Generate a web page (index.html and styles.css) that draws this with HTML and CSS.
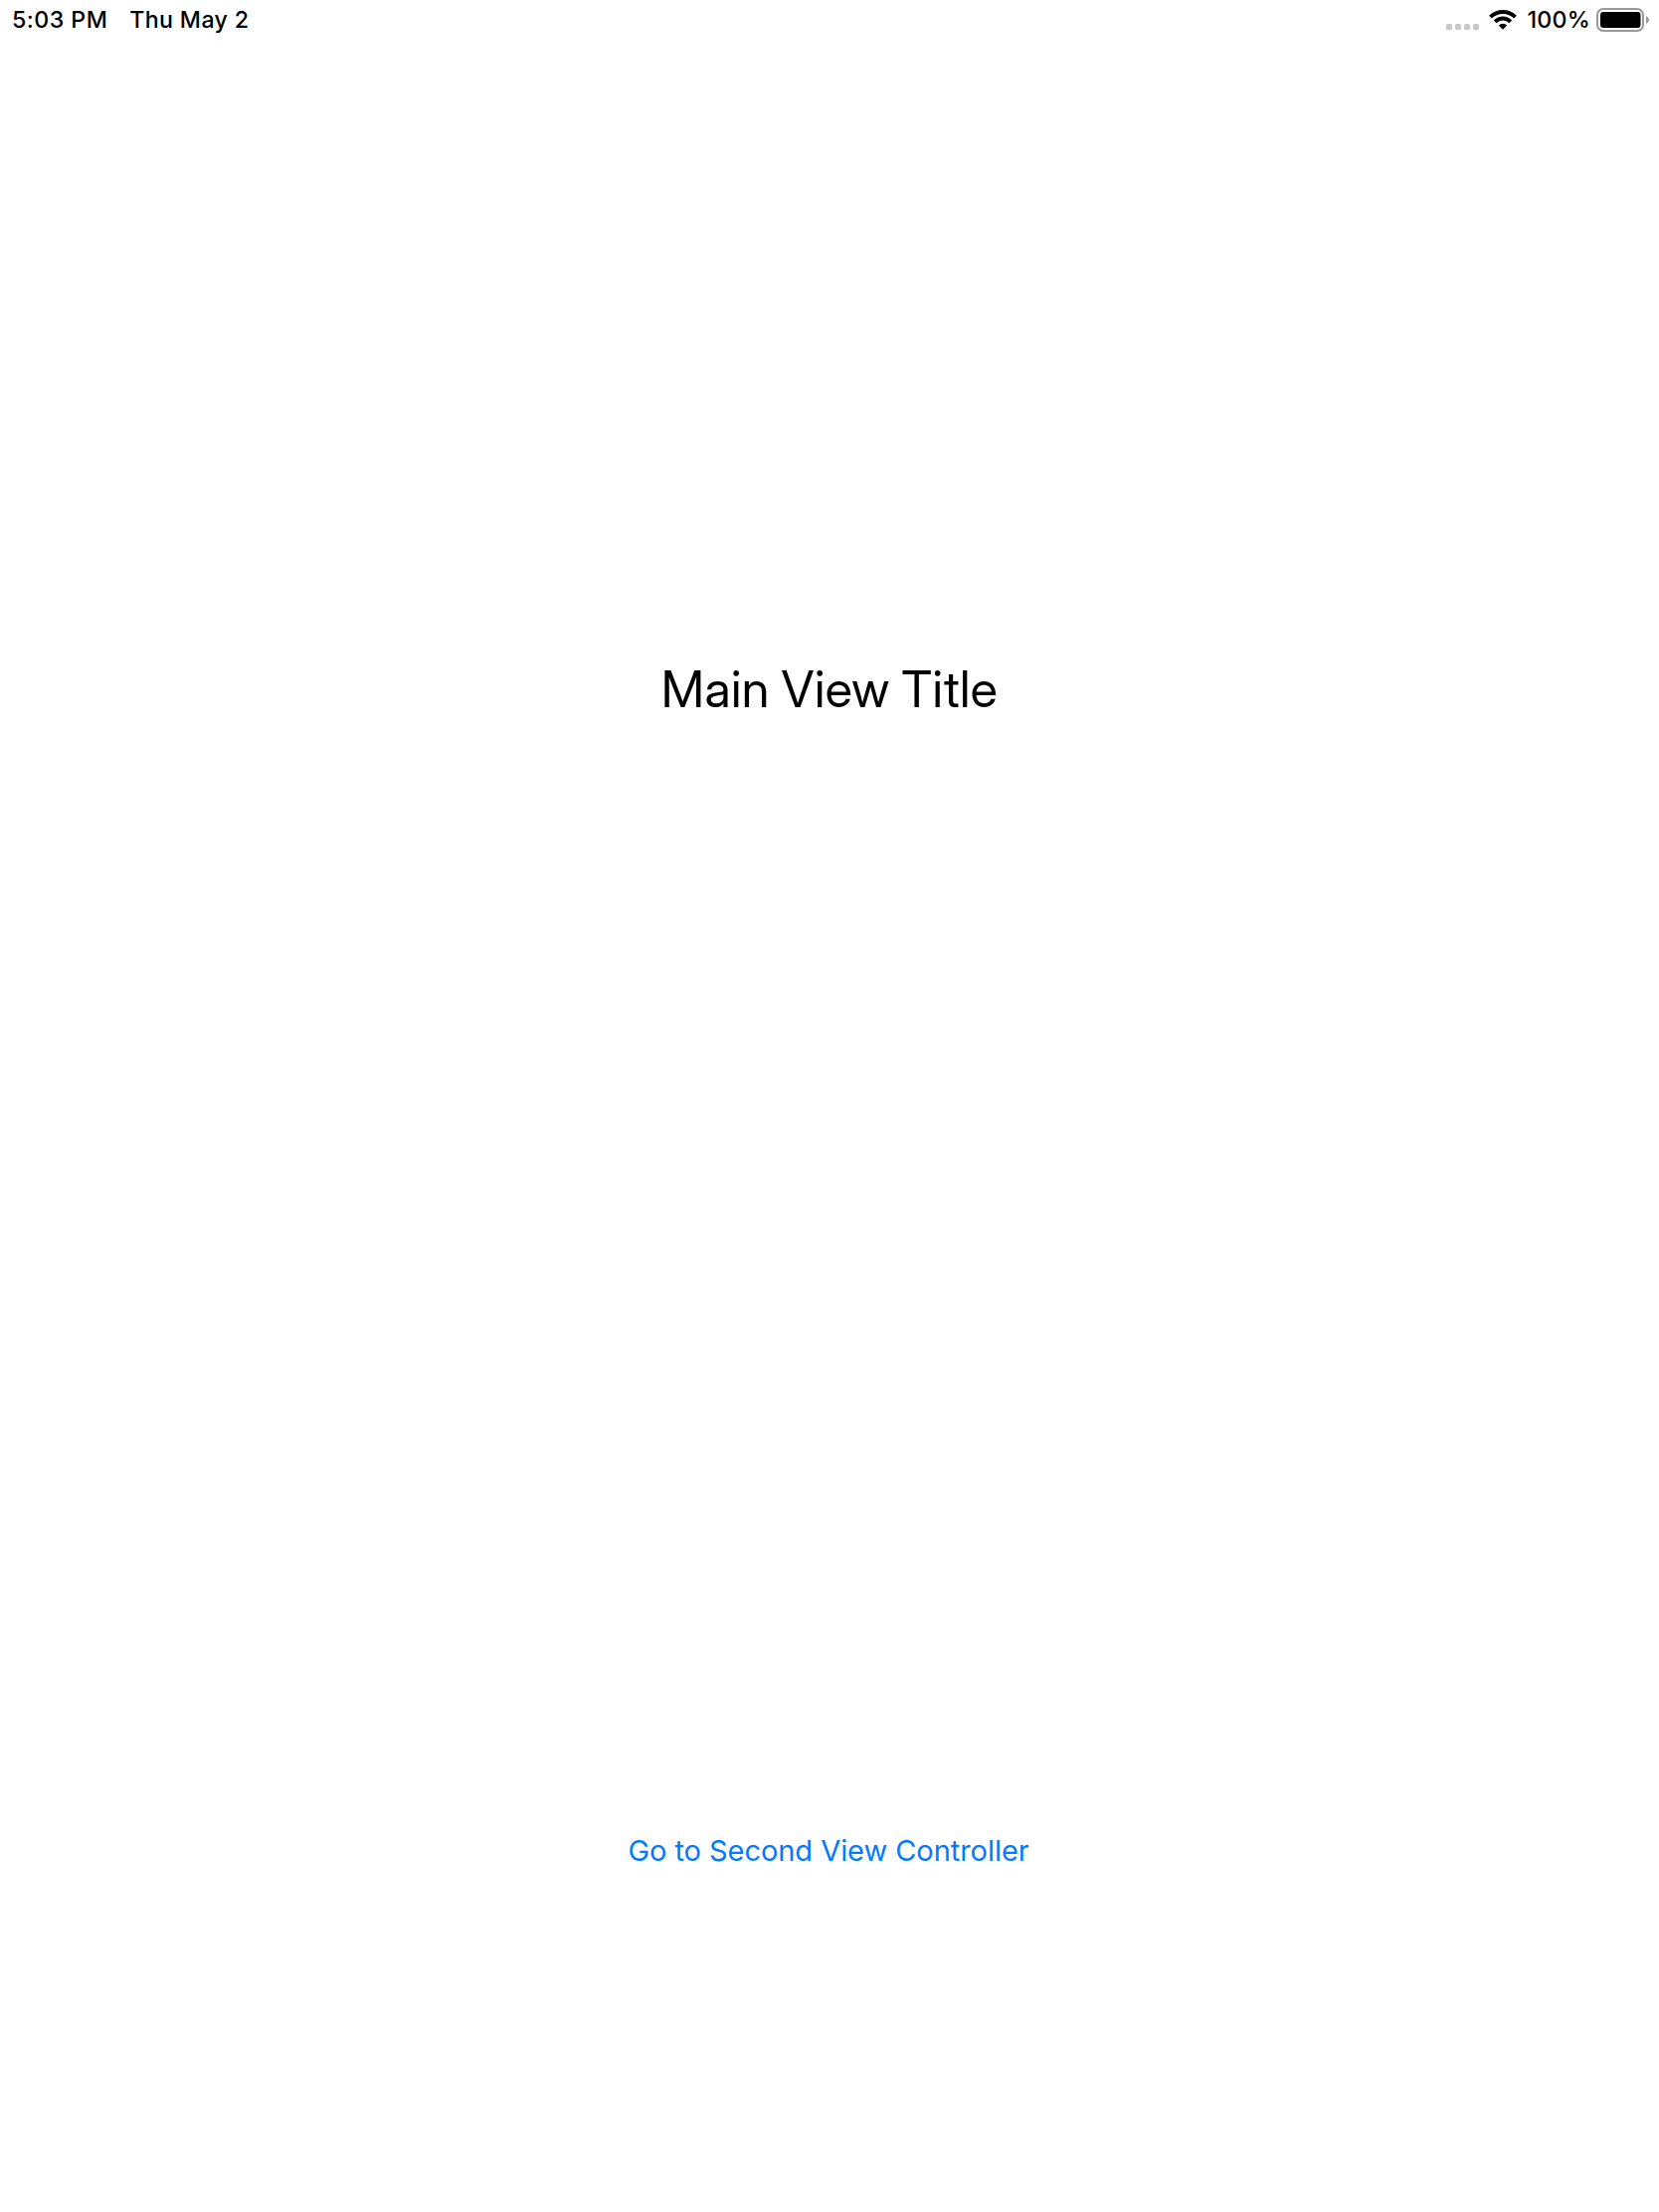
FILE: index.html
```html
<!DOCTYPE html>
<html lang="en">
<head>
<meta charset="utf-8">
<title>Main View</title>
<link rel="stylesheet" href="styles.css">
</head>
<body>
<header class="status-bar">
  <div class="status-group">
    <span class="time">5:03 PM</span>
    <span class="date">Thu May 2</span>
  </div>
  <div class="status-group">
    <svg class="signal" width="33" height="40" viewBox="0 0 33 40" fill="#c8c8c8" aria-hidden="true">
      <rect x="0" y="24" width="6" height="6" rx="1.5"/>
      <rect x="9" y="24" width="6" height="6" rx="1.5"/>
      <rect x="18" y="24" width="6" height="6" rx="1.5"/>
      <rect x="27" y="24" width="6" height="6" rx="1.5"/>
    </svg>
    <svg class="wifi" width="28" height="40" viewBox="0 0 28 40" aria-hidden="true">
      <path d="M1.5 17.2A17.6 17.6 0 0 1 26.5 17.2M6.2 21.8A11 11 0 0 1 21.8 21.8" fill="none" stroke="#000" stroke-width="3.9"/>
      <path d="M9.8 25.4A6 6 0 0 1 18.2 25.4L14 29.8Z"/>
    </svg>
    <span class="percent">100%</span>
    <svg class="battery" width="54" height="40" viewBox="0 0 54 40" aria-hidden="true">
      <rect x="1" y="9" width="46" height="22" rx="6" fill="none" stroke="#999" stroke-width="2"/>
      <rect x="4" y="12" width="40.5" height="16" rx="3"/>
      <path d="M50 16Q53 17.5 53 20Q53 22.5 50 24Z" fill="#999"/>
    </svg>
  </div>
</header>
<main class="view">
  <h1 class="title">Main View Title</h1>
  <button class="link" type="button">Go to Second View Controller</button>
</main>
</body>
</html>
```

FILE: styles.css
```css
body {
  margin: 0;
  height: 2224px;
  display: flex;
  flex-direction: column;
  background: #fff;
  color: #000;
  font-family: Inter, "Liberation Sans", sans-serif;
}

.status-bar {
  display: flex;
  justify-content: space-between;
  height: 40px;
  padding: 0 9px 0 12px;
  font-size: 23.2px;
  font-weight: 500;
  line-height: 41px;
  white-space: nowrap;
}

.status-group {
  display: flex;
}

.time {
  letter-spacing: 0.45px;
}

.date {
  margin-left: 22px;
  letter-spacing: 0.35px;
}

.wifi {
  margin-left: 10px;
}

.percent {
  margin-left: 10px;
  letter-spacing: 0.25px;
}

.battery {
  margin-left: 6px;
}

.view {
  flex: 1;
  display: flex;
  flex-direction: column;
  align-items: center;
}

.title {
  margin: 622px 0 0;
  font-family: "Inter Display", Inter, "Liberation Sans", sans-serif;
  font-size: 50.5px;
  font-variation-settings: "opsz" 32;
  font-weight: 420;
  letter-spacing: 0.4px;
  word-spacing: -1.3px;
  line-height: 62px;
}

.link {
  margin: 1119px 0 0;
  padding: 0 2px 0 0;
  border: 0;
  background: none;
  color: #007aff;
  font: inherit;
  font-size: 29px;
  letter-spacing: -0.05px;
  line-height: 36px;
}
```
